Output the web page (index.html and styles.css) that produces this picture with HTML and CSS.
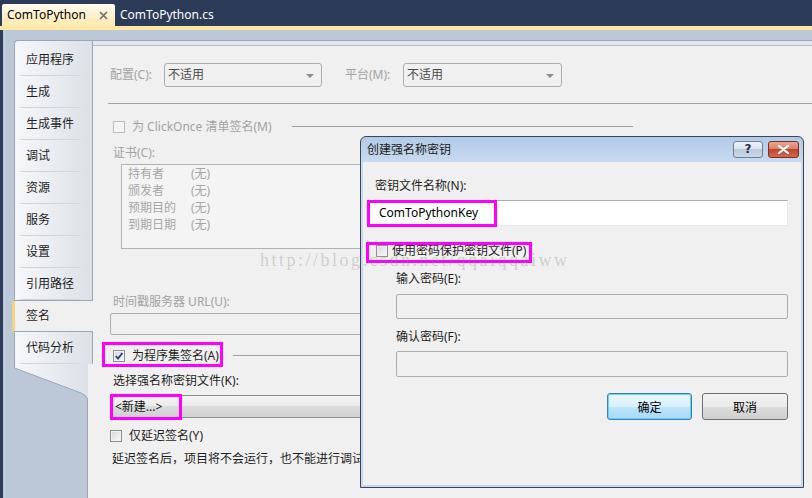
FILE: index.html
```html
<!DOCTYPE html>
<html lang="zh-CN">
<head>
<meta charset="utf-8">
<title>ComToPython</title>
<link rel="stylesheet" href="styles.css">
</head>
<body>
<div class="docbar">
  <div class="doctab active"><span>ComToPython</span><svg class="xicon" width="9" height="9" viewBox="0 0 9 9"><path d="M1 1L8 8M8 1L1 8" stroke="#6b6b6b" stroke-width="1.6"/></svg></div>
  <div class="doctab">ComToPython.cs</div>
</div>
<div class="stripe"></div>
<div class="workspace">
  <div class="side">
    <div class="tabs">
      <div class="tab">应用程序</div>
      <div class="tab">生成</div>
      <div class="tab">生成事件</div>
      <div class="tab">调试</div>
      <div class="tab">资源</div>
      <div class="tab">服务</div>
      <div class="tab">设置</div>
      <div class="tab">引用路径</div>
      <div class="tab sel">签名</div>
      <div class="tab">代码分析</div>
    </div>
    <svg class="tail" width="79" height="134" viewBox="0 0 79 134">
      <defs>
        <linearGradient id="tg" x1="0" y1="0" x2="1" y2="0">
          <stop offset="0" stop-color="#f6f7f9"/>
          <stop offset="1" stop-color="#dce1e8"/>
        </linearGradient>
      </defs>
      <rect x="0" y="0" width="74" height="134" fill="url(#tg)"/>
      <rect x="74" y="0" width="5" height="134" fill="#f0f0f0"/>
      <path d="M0 4L67 29Q72 31 74 35L74 134L0 134Z" fill="#bcc7d8"/>
      <path d="M0.5 0L0.5 4L67 29Q72 31 73.5 35L73.5 134" fill="none" stroke="#9aa6b6" stroke-width="1"/>
    </svg>
  </div>
  <div class="panel">
    <div class="phead"></div>
    <div class="content">
      <div class="row cfg">
        <span class="lbl dis w54">配置(C):</span>
        <div class="select w158">不适用<i class="arrow"></i></div>
        <span class="lbl dis w58 ml23">平台(M):</span>
        <div class="select w159">不适用<i class="arrow"></i></div>
      </div>
      <div class="hr"></div>
      <div class="cbrow r-clickonce">
        <span class="cb dis"></span>
        <span class="cbtext dis w160">为 ClickOnce 清单签名(M)</span>
        <span class="gline w341"></span>
      </div>
      <div class="lbl dis sub r-cert">证书(C):</div>
      <div class="certbox">
        <div class="certrow"><span class="ck">持有者</span><span>(无)</span></div>
        <div class="certrow"><span class="ck">颁发者</span><span>(无)</span></div>
        <div class="certrow"><span class="ck">预期目的</span><span>(无)</span></div>
        <div class="certrow"><span class="ck">到期日期</span><span>(无)</span></div>
      </div>
      <div class="lbl dis sub r-url">时间戳服务器 URL(U):</div>
      <div class="textbox dis r-urlbox"></div>
      <div class="cbrow r-sign">
        <span class="mark m-sign"></span>
        <span class="cb"><svg width="10" height="10" viewBox="0 0 10 10"><path d="M1.8 5.2L4 7.6L8.4 2" fill="none" stroke="#2a3f8e" stroke-width="1.9"/></svg></span>
        <span class="cbtext w101">为程序集签名(A)</span>
        <span class="gline w127"></span>
      </div>
      <div class="lbl sub r-key">选择强名称密钥文件(K):</div>
      <div class="combo r-combo"><span class="mark m-new"></span>&lt;新建...&gt;</div>
      <div class="cbrow r-delay">
        <span class="cb"></span>
        <span class="cbtext">仅延迟签名(Y)</span>
      </div>
      <div class="desc">延迟签名后，项目将不会运行，也不能进行调试。</div>
    </div>
  </div>
</div>

<div class="dialog">
  <div class="dlg-title">
    <span class="dlg-caption">创建强名称密钥</span>
    <span class="tbtn help">?</span>
    <span class="tbtn close"><svg width="13" height="9" viewBox="0 0 13 9"><path d="M2 1L11 8M11 1L2 8" stroke="#fff" stroke-width="2.2" stroke-linecap="round"/></svg></span>
  </div>
  <div class="dlg-body">
    <div class="dlbl">密钥文件名称(N):</div>
    <div class="textbox white d-name"><span class="mark m-name"></span>ComToPythonKey</div>
    <div class="cbrow d-pw">
      <span class="mark m-pw"></span>
      <span class="cb"></span>
      <span class="cbtext">使用密码保护密钥文件(P)</span>
    </div>
    <div class="dlbl ind d-e">输入密码(E):</div>
    <div class="textbox dis ind d-ebox"></div>
    <div class="dlbl ind d-f">确认密码(F):</div>
    <div class="textbox dis ind d-fbox"></div>
    <div class="dlg-buttons">
      <span class="pbtn default">确定</span>
      <span class="pbtn">取消</span>
    </div>
  </div>
</div>

<div class="watermark">http://blog.csdn.net/qqaiqqaiww</div>
</body>
</html>
```

FILE: styles.css
```css
* { box-sizing: border-box; margin: 0; padding: 0; }
html, body { width: 812px; height: 498px; overflow: hidden; }
body {
  font-family: "Noto Sans", "Noto Sans CJK SC", sans-serif;
  font-size: 12px;
  color: #1e1e1e;
  background: #bcc7d8;
  position: relative;
}

/* document tabs */
.docbar {
  height: 26px;
  background: #2b3b58;
  display: flex;
  align-items: flex-end;
  padding-left: 2px;
}
.doctab {
  height: 22px;
  display: flex;
  align-items: center;
  padding-left: 5px;
  color: #fff;
  line-height: 16px;
}
.doctab.active {
  width: 113px;
  color: #000;
  background: linear-gradient(#fffbf0, #ffe9ad);
  border-radius: 2px 2px 0 0;
  justify-content: space-between;
  padding-right: 7px;
}
.stripe { height: 4px; background: #ffe8a6; }

/* workspace */
.workspace {
  height: 468px;
  display: flex;
  border-left: 3px solid #2b3b58;
  padding: 10px 0 0 11px;
}
.side {
  width: 78px;
  flex: none;
  display: flex;
  flex-direction: column;
}
.tabs {
  border-left: 1px solid #9aa6b6;
  border-top: 1px solid #9aa6b6;
  border-radius: 4px 0 0 0;
  background: linear-gradient(to right, #f6f7f9, #dce1e8);
  padding-top: 3px;
}
.tab {
  height: 32px;
  display: flex;
  align-items: center;
  padding-left: 11px;
  line-height: 16px;
  background: linear-gradient(to right, transparent 2px, #cbd1d9 8px, #d2d7de 62px, transparent 68px) left bottom / 100% 1px no-repeat;
}
.tab.sel {
  position: relative;
  z-index: 1;
  margin-left: -3px;
  margin-right: -1px;
  padding-left: 11px;
  background: #f0f0f0;
  border-left: 3px solid #f2d283;
  border-top: 1px solid #9aa6b6;
  border-bottom: 1px solid #9aa6b6;
}
.tail { display: block; position: relative; z-index: 1; flex: none; }

/* panel */
.panel {
  flex: 1;
  background: #f0f0f0;
  border-left: 1px solid #9aa6b6;
  border-top: 1px solid #9aa6b6;
}
.phead {
  height: 5px;
  background: #e3e6eb;
  border-bottom: 1px solid #b3bcc8;
}
.content { padding-left: 17px; }
.row { display: flex; align-items: center; }
.cfg { margin-top: 17px; height: 24px; }
.lbl { line-height: 16px; white-space: nowrap; }
.dis { color: #a2a2a2; }
.w54 { width: 54px; flex: none; }
.w58 { width: 58px; flex: none; }
.ml23 { margin-left: 23px; }
.select {
  position: relative;
  height: 24px;
  border: 1px solid #acacac;
  border-radius: 3px;
  background: #f0f0f0;
  color: #4a4a4a;
  line-height: 22px;
  padding-left: 3px;
}
.w158 { width: 158px; }
.w159 { width: 159px; }
.arrow {
  position: absolute;
  right: 7px;
  top: 10px;
  border-left: 4px solid transparent;
  border-right: 4px solid transparent;
  border-top: 4px solid #8c8c8c;
}
.hr { margin: 16px 0 0 -2px; height: 1px; background: #a0a0a0; }

.cbrow {
  position: relative;
  display: flex;
  align-items: center;
  height: 17px;
  line-height: 16px;
  white-space: nowrap;
}
.cb {
  width: 12px;
  height: 12px;
  flex: none;
  border: 1px solid #8e8f8f;
  background: linear-gradient(135deg, #d3d7dd, #fbfbfb);
  box-shadow: inset 0 0 0 1px #f2f2f2;
  display: flex;
  align-items: center;
  justify-content: center;
}
.cb.dis { border-color: #bdbdbd; background: #f5f5f5; box-shadow: none; }
.cbtext { margin-left: 7px; }
.w160 { width: 160px; flex: none; }
.w101 { width: 101px; flex: none; }
.gline { height: 1px; background: #a0a0a0; flex: none; }
.w341 { width: 341px; }
.w127 { width: 127px; }

.r-clickonce { margin-top: 14px; padding-left: 3px; }
.sub { padding-left: 3px; }
.r-cert { margin-top: 10px; }
.certbox {
  margin: 3px 0 0 11px;
  width: 512px;
  height: 85px;
  border: 1px solid #b2b2b2;
  background: #f4f4f4;
  padding-left: 6px;
  color: #a6a6a6;
}
.certrow { display: flex; line-height: 17px; }
.ck { width: 63px; }
.r-url { margin-top: 44px; line-height: 17px; }
.textbox {
  position: relative;
  height: 22px;
  border: 1px solid #b4b4b4;
  border-radius: 2px;
  background: #f4f4f4;
}
.r-urlbox { margin-top: 3px; width: 680px; }
.r-sign { margin-top: 12px; padding-left: 3px; }
.r-key { margin-top: 8px; line-height: 17px; }
.combo {
  position: relative;
  margin-top: 6px;
  width: 680px;
  height: 23px;
  border: 1px solid #8e8f8f;
  background: linear-gradient(#f3f3f3, #ebebeb 50%, #dcdcdc 50%, #d0d0d0);
  line-height: 21px;
  padding-left: 4px;
  color: #111;
}
.r-delay { margin-top: 9px; }
.desc { margin-top: 6px; padding-left: 2px; line-height: 17px; white-space: nowrap; }

/* magenta annotations */
.mark {
  position: absolute;
  border: 3px solid #f0f;
  pointer-events: none;
  z-index: 2;
}
.m-sign { left: -8px; top: -5px; width: 121px; height: 25px; }
.m-new { left: -1px; top: -2px; width: 72px; height: 26px; }
.m-name { left: -2px; top: -1px; width: 130px; height: 27px; }
.m-pw { left: -9px; top: -1px; width: 166px; height: 21px; }

/* dialog */
.dialog {
  position: absolute;
  left: 360px;
  top: 136px;
  width: 444px;
  height: 352px;
  border: 1px solid #3b4657;
  border-radius: 6px 6px 0 0;
  background: linear-gradient(#b3cae7, #c9dbf1 26px, #c4d8f0);
  padding: 0 2px 2px;
  display: flex;
  flex-direction: column;
  z-index: 3;
}
.dlg-title {
  height: 25px;
  flex: none;
  display: flex;
  align-items: center;
  padding-left: 4px;
}
.dlg-caption { flex: 1; line-height: 16px; color: #1b1b1b; }
.tbtn {
  height: 17px;
  border-radius: 3px;
  display: flex;
  align-items: center;
  justify-content: center;
}
.help {
  width: 30px;
  border: 1px solid #6f7f96;
  background: linear-gradient(#eef2f7, #d7e0eb 50%, #bccadc 50%, #c9d6e6);
  color: #2d3340;
  font-family: "DejaVu Sans", sans-serif;
  font-weight: bold;
  font-size: 12px;
  line-height: 15px;
}
.close {
  width: 31px;
  margin-left: 5px;
  margin-right: 2px;
  border: 1px solid #7b2d20;
  background: linear-gradient(#e9a995, #d77c65 50%, #c4442b 50%, #d06a4e);
}
.dlg-body {
  flex: 1;
  background: #f0f0f0;
  padding: 16px 13px 0 12px;
}
.dlbl { line-height: 16px; white-space: nowrap; }
.ind { margin-left: 21px; }
.d-name {
  margin: 6px 0 0 -7px;
  height: 26px;
  background: #fff;
  border-color: #abadb3 #e3e9ef #e3e9ef #e2e3ea;
  border-radius: 0;
  line-height: 24px;
  padding-left: 10px;
  color: #000;
}
.d-pw { margin-top: 17px; height: 16px; }
.d-pw .cb { margin-left: 1px; }
.d-pw .cbtext { margin-left: 4px; }
.d-e { margin-top: 12px; }
.d-ebox { margin-top: 7px; height: 25px; }
.d-f { margin-top: 10px; }
.d-fbox { margin-top: 6px; height: 26px; }
.textbox.dis { background: #f0f0f0; border-color: #adadad; }
.dlg-buttons {
  margin-top: 16px;
  display: flex;
  justify-content: flex-end;
  gap: 10px;
}
.pbtn {
  width: 86px;
  height: 27px;
  border: 1px solid #707070;
  border-radius: 3px;
  background: linear-gradient(#f2f2f2, #ebebeb 50%, #dddddd 50%, #cfcfcf);
  display: flex;
  align-items: center;
  justify-content: center;
  color: #000;
}
.pbtn.default {
  width: 85px;
  border-color: #3c7fb1;
  background: linear-gradient(#eaf6fd, #d9f0fc 50%, #bee6fd 50%, #a7d9f5);
  box-shadow: inset 0 0 0 1px #5fd3fb;
}

/* watermark */
.watermark {
  position: absolute;
  left: 260px;
  top: 250px;
  z-index: 5;
  font-family: "Liberation Serif", serif;
  font-size: 18px;
  line-height: 20px;
  letter-spacing: 2.5px;
  color: rgba(110, 110, 110, 0.28);
  white-space: nowrap;
  pointer-events: none;
}
```
